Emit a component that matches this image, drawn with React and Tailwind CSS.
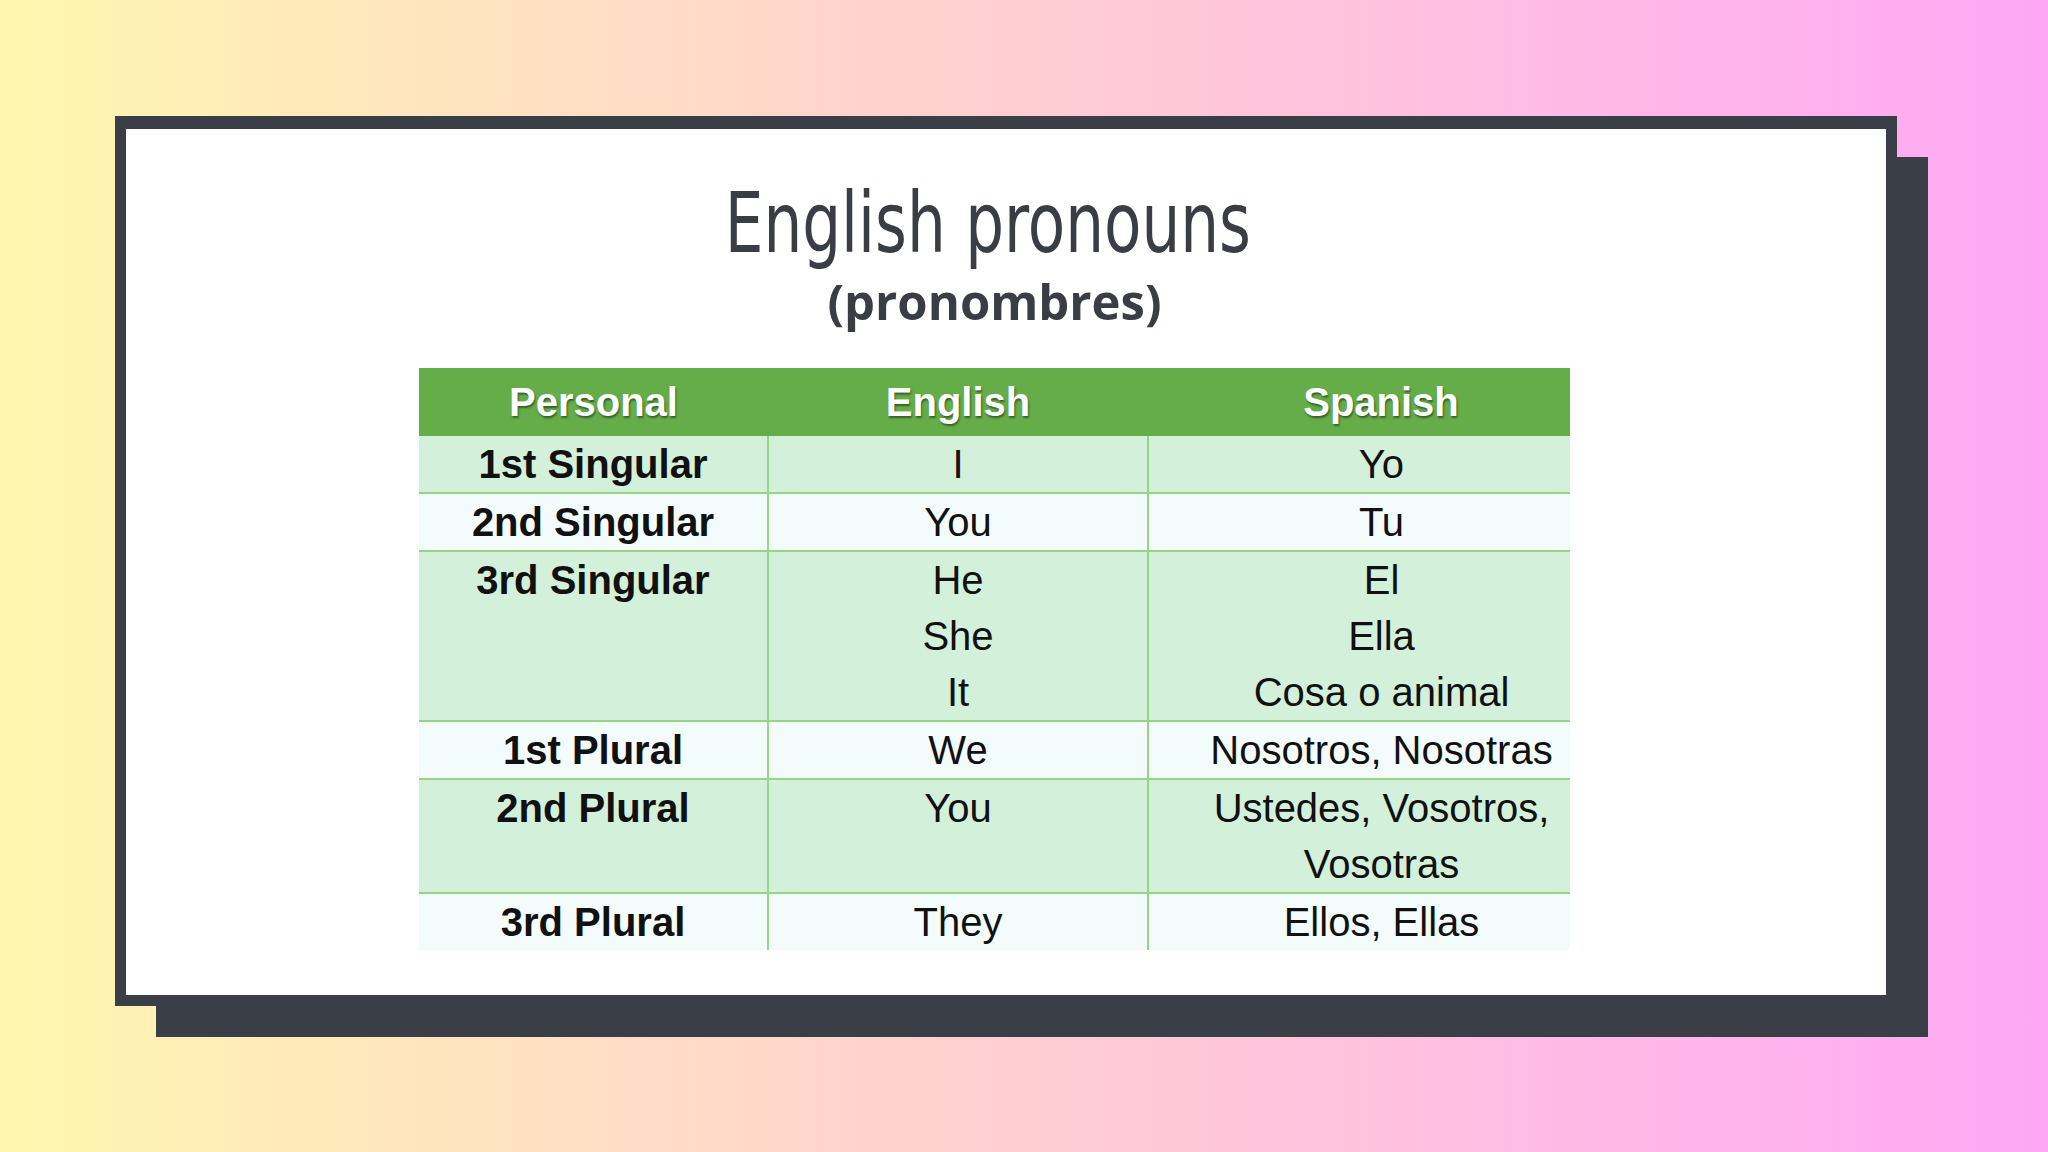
// App.jsx — English pronouns slide
const rows = [
  { person: '1st Singular', en: ['I'], es: ['Yo'], tint: 'green' },
  { person: '2nd Singular', en: ['You'], es: ['Tu'], tint: 'white' },
  { person: '3rd Singular', en: ['He', 'She', 'It'], es: ['El', 'Ella', 'Cosa o animal'], tint: 'green' },
  { person: '1st Plural', en: ['We'], es: ['Nosotros, Nosotras'], tint: 'white' },
  { person: '2nd Plural', en: ['You', ''], es: ['Ustedes, Vosotros,', 'Vosotras'], tint: 'green' },
  { person: '3rd Plural', en: ['They'], es: ['Ellos, Ellas'], tint: 'white' },
];

const Lines = ({ items }) =>
  items.map((t, i) => (
    <div key={i} className="h-[56px] whitespace-nowrap">
      {t || '\u00a0'}
    </div>
  ));

const PronounTable = () => (
  <table className="w-[1151px] border-collapse text-[40px] leading-[56px] text-[#111]">
    <thead>
      <tr className="bg-[#64ad48] text-white font-bold [text-shadow:1px_2px_2px_rgba(0,0,0,0.45)]">
        <th className="h-[68px] w-[349px] p-0 font-bold">Personal</th>
        <th className="h-[68px] w-[380px] p-0 font-bold">English</th>
        <th className="h-[68px] p-0 pl-[44px] font-bold">Spanish</th>
      </tr>
    </thead>
    <tbody>
      {rows.map((r, i) => (
        <tr
          key={i}
          className={r.tint === 'green' ? 'bg-[#d3f0da]' : 'bg-[#f4fcfb]'}
        >
          <td className={'p-0 align-top text-center font-bold border-r-2 border-[#95d585] ' + (i > 0 ? 'border-t-2' : '')}>
            <Lines items={[r.person]} />
          </td>
          <td className={'p-0 align-top text-center border-r-2 border-[#95d585] ' + (i > 0 ? 'border-t-2' : '')}>
            <Lines items={r.en} />
          </td>
          <td className={'p-0 pl-[44px] align-top text-center border-[#95d585] ' + (i > 0 ? 'border-t-2' : '')}>
            <Lines items={r.es} />
          </td>
        </tr>
      ))}
    </tbody>
  </table>
);

export default function App() {
  return (
    <div
      className="w-[2048px] h-[1152px] overflow-hidden bg-linear-to-r from-[#fff6ae] via-[#ffcdd2] to-[#fea8f5] pt-[116px] pl-[115px]"
      style={{ fontFamily: '"Liberation Sans", Arial, sans-serif' }}
    >
      <div className="w-[1782px] h-[890px] bg-white border-[11px] border-t-[13px] border-[#3a3e47] shadow-[36px_36px_0_-5px_#3a3e47]">
        <div className="w-[1151px] ml-[293px] flex flex-col items-center">
          <h1
            className="mt-[52px] mr-[13px] text-[84px] leading-none font-normal text-[#3a3d44] scale-x-[0.81]"
            style={{ fontFamily: '"DejaVu Sans Condensed", sans-serif' }}
          >
            English pronouns
          </h1>
          <p
            className="mt-[12px] text-[49px] leading-none font-bold text-[#3a3d44]"
            style={{ fontFamily: '"Open Sans", sans-serif' }}
          >
            (pronombres)
          </p>
          <div className="mt-[42px]">
            <PronounTable />
          </div>
        </div>
      </div>
    </div>
  );
}
